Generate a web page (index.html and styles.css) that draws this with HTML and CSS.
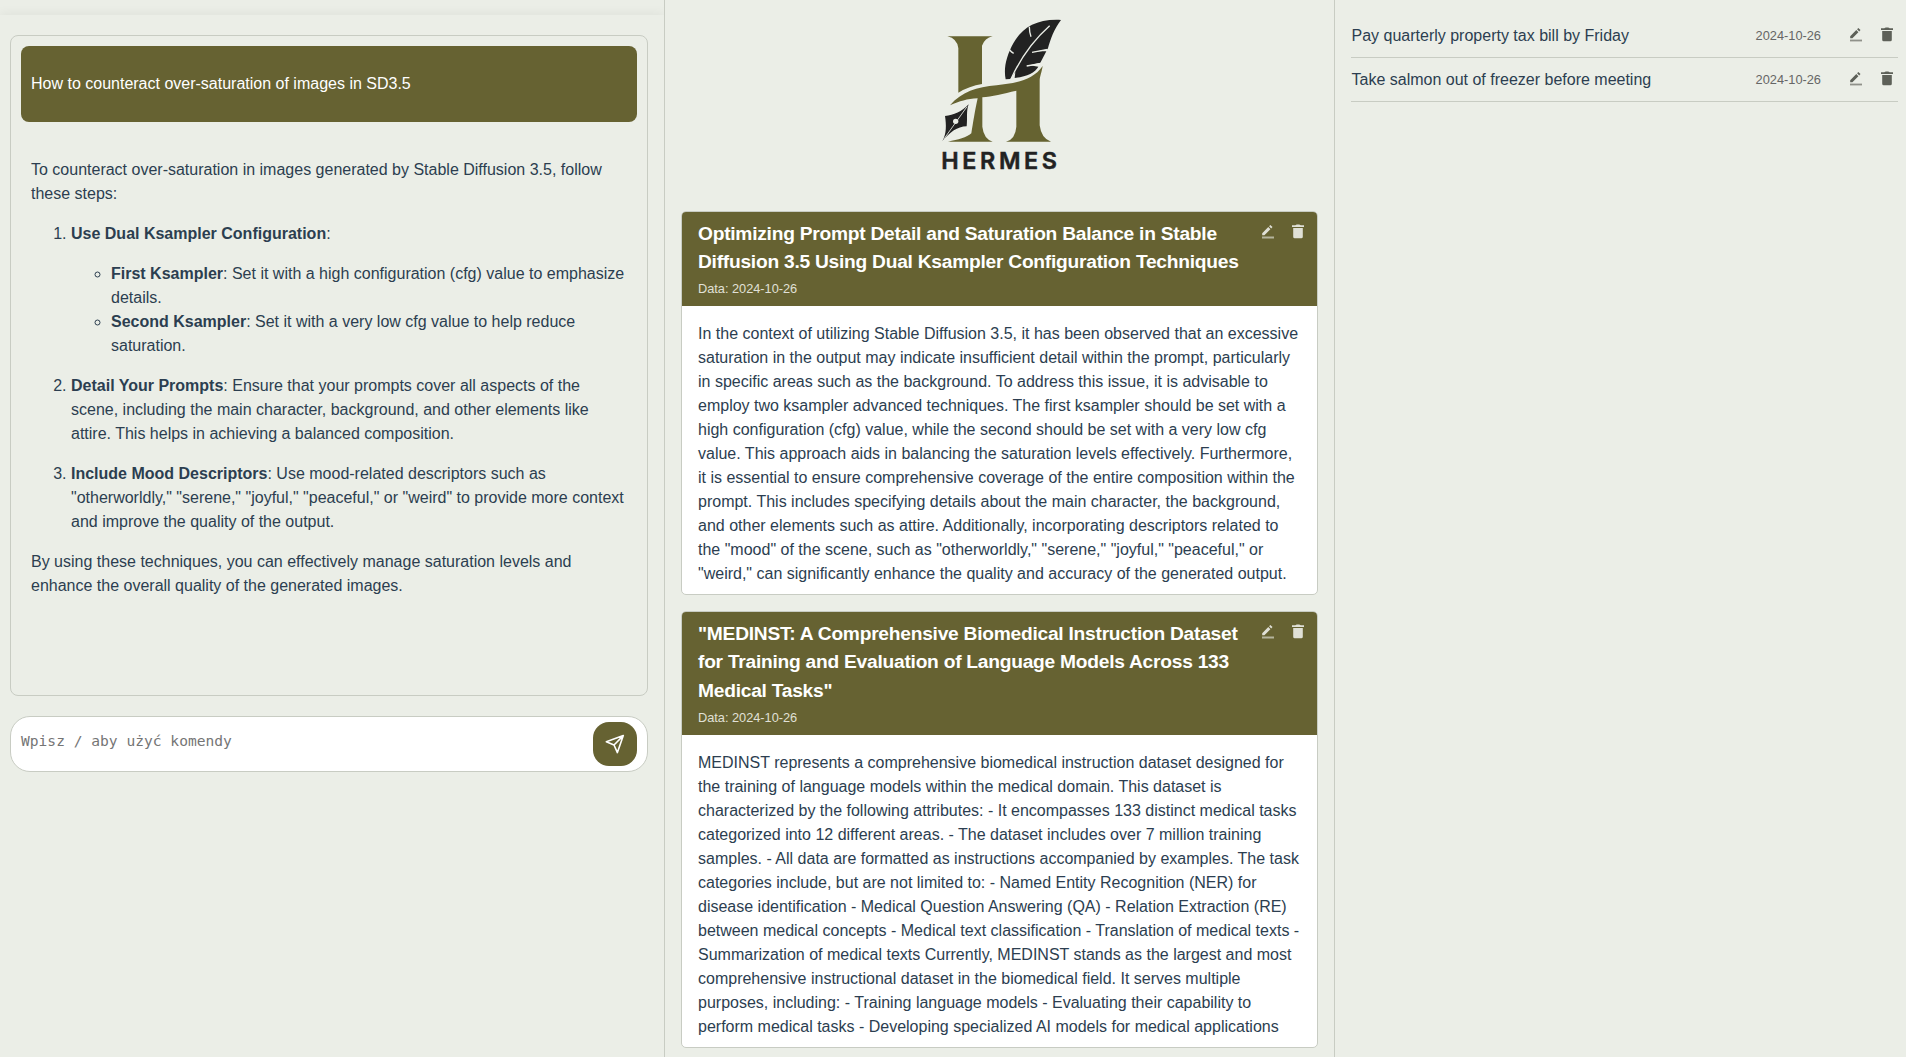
FILE: index.html
```html
<!DOCTYPE html>
<html lang="pl">
<head>
<meta charset="utf-8">
<title>Hermes</title>
<link rel="stylesheet" href="styles.css">
</head>
<body>
<svg class="sprite" aria-hidden="true">
  <symbol id="edit" viewBox="0 0 16 16">
    <path d="M2.2 10.2V12.2H4.4L10.4 6.2L8.3 4.1ZM11.2 5.4L12.5 4.1L10.3 1.9L9.1 3.2Z" fill="currentColor"/>
    <path d="M2 13.6H14V15.4H2Z" fill="currentColor" opacity=".65"/>
  </symbol>
  <symbol id="trash" viewBox="0 0 16 16">
    <path d="M2 2.3H5.3Q6 1.5 7 1.5H9Q10 1.5 10.7 2.3H14V4H2ZM3.2 5H12.8V13.8Q12.8 15.3 11.3 15.3H4.7Q3.2 15.3 3.2 13.8Z" fill="currentColor"/>
  </symbol>
</svg>
<div class="app">
  <section class="chat">
    <div class="chat-panel">
      <div class="messages">
        <div class="message user"><p>How to counteract over-saturation of images in SD3.5</p></div>
        <div class="message">
          <p>To counteract over-saturation in images generated by Stable Diffusion 3.5, follow these steps:</p>
          <ol>
            <li><p><strong>Use Dual Ksampler Configuration</strong>:</p>
              <ul>
                <li><strong>First Ksampler</strong>: Set it with a high configuration (cfg) value to emphasize details.</li>
                <li><strong>Second Ksampler</strong>: Set it with a very low cfg value to help reduce saturation.</li>
              </ul>
            </li>
            <li><p><strong>Detail Your Prompts</strong>: Ensure that your prompts cover all aspects of the scene, including the main character, background, and other elements like attire. This helps in achieving a balanced composition.</p></li>
            <li><p><strong>Include Mood Descriptors</strong>: Use mood-related descriptors such as "otherworldly," "serene," "joyful," "peaceful," or "weird" to provide more context and improve the quality of the output.</p></li>
          </ol>
          <p>By using these techniques, you can effectively manage saturation levels and enhance the overall quality of the generated images.</p>
        </div>
      </div>
      <div class="composer">
        <span class="placeholder">Wpisz / aby użyć komendy</span>
        <button class="send" aria-label="Send">
          <svg width="20" height="20" viewBox="0 0 20 20" fill="none" stroke="#fff" stroke-width="1.6" stroke-linejoin="round" stroke-linecap="round"><path d="M18.3 1.6L1.3 7.8L9 11L12.4 18.6ZM9 11L18.3 1.6"/></svg>
        </button>
      </div>
    </div>
  </section>

  <main class="notes">
    <div class="logo">
      <svg width="160" height="190" viewBox="0 0 480 570" role="img" aria-label="Hermes">
        <g fill="#666331">
          <path d="M82 109H218Q194 115 186 137V252Q148 258 115 278V145Q112 116 82 109Z"/>
          <path d="M90 316C125 275 170 262 230 256C285 250 338 242 368 198C365 217 360 228 359 240V376Q364 416 393 425H258Q286 418 289 380V272C250 281 215 290 187 292V380Q191 416 218 425H84C115 419 140 413 154 400C159 370 165 330 173 295C140 297 120 303 90 316Z"/>
        </g>
        <path d="M423 60C350 56 305 84 280 130C260 166 250 205 257 238L271 237L286 216L284 234C320 230 345 218 355 200L338 197L320 198L361 188L379 154L358 154L336 157L383 148C392 115 402 88 423 60Z" fill="#222"/>
        <path d="M389 77C345 116 304 168 272 239M328 80Q328 95 333 110M269 150Q274 156 281 160M336 157L383 148M320 198L363 190" fill="none" stroke="#ebeee7" stroke-width="4"/>
        <path d="M146 313L67 423C80 401 79 375 75 348C101 346 126 335 146 313C138 334 143 354 140 379C111 380 91 396 67 423Z" fill="#222"/>
        <path d="M141 320L71 418" stroke="#ebeee7" stroke-width="2.5"/>
        <circle cx="107" cy="364" r="8" fill="#ebeee7"/>
        <text class="logo-name" x="64" y="508" textLength="347" lengthAdjust="spacing">HERMES</text>
      </svg>
    </div>
    <article class="card">
      <header>
        <div>
          <h2>Optimizing Prompt Detail and Saturation Balance in Stable Diffusion 3.5 Using Dual Ksampler Configuration Techniques</h2>
          <small>Data: 2024-10-26</small>
        </div>
        <div class="actions"><svg><use href="#edit"/></svg><svg><use href="#trash"/></svg></div>
      </header>
      <p>In the context of utilizing Stable Diffusion 3.5, it has been observed that an excessive saturation in the output may indicate insufficient detail within the prompt, particularly in specific areas such as the background. To address this issue, it is advisable to employ two ksampler advanced techniques. The first ksampler should be set with a high configuration (cfg) value, while the second should be set with a very low cfg value. This approach aids in balancing the saturation levels effectively. Furthermore, it is essential to ensure comprehensive coverage of the entire composition within the prompt. This includes specifying details about the main character, the background, and other elements such as attire. Additionally, incorporating descriptors related to the "mood" of the scene, such as "otherworldly," "serene," "joyful," "peaceful," or "weird," can significantly enhance the quality and accuracy of the generated output.</p>
    </article>
    <article class="card">
      <header>
        <div>
          <h2>"MEDINST: A Comprehensive Biomedical Instruction Dataset for Training and Evaluation of Language Models Across 133 Medical Tasks"</h2>
          <small>Data: 2024-10-26</small>
        </div>
        <div class="actions"><svg><use href="#edit"/></svg><svg><use href="#trash"/></svg></div>
      </header>
      <p>MEDINST represents a comprehensive biomedical instruction dataset designed for the training of language models within the medical domain. This dataset is characterized by the following attributes: - It encompasses 133 distinct medical tasks categorized into 12 different areas. - The dataset includes over 7 million training samples. - All data are formatted as instructions accompanied by examples. The task categories include, but are not limited to: - Named Entity Recognition (NER) for disease identification - Medical Question Answering (QA) - Relation Extraction (RE) between medical concepts - Medical text classification - Translation of medical texts - Summarization of medical texts Currently, MEDINST stands as the largest and most comprehensive instructional dataset in the biomedical field. It serves multiple purposes, including: - Training language models - Evaluating their capability to perform medical tasks - Developing specialized AI models for medical applications</p>
    </article>
  </main>

  <aside class="tasks">
    <div class="task">
      <span class="task-name">Pay quarterly property tax bill by Friday</span>
      <time>2024-10-26</time>
      <div class="actions"><svg><use href="#edit"/></svg><svg><use href="#trash"/></svg></div>
    </div>
    <div class="task">
      <span class="task-name">Take salmon out of freezer before meeting</span>
      <time>2024-10-26</time>
      <div class="actions"><svg><use href="#edit"/></svg><svg><use href="#trash"/></svg></div>
    </div>
  </aside>
</div>
</body>
</html>
```
FILE: styles.css
```css
* { box-sizing: border-box; }
body {
  margin: 0;
  background: #ebeee7;
  color: #2c3e50;
  font: 16px/24px "Liberation Sans", Arial, sans-serif;
}
.sprite { display: none; }
.app {
  display: grid;
  grid-template-columns: 665px 670px 1fr;
  height: 1057px;
  overflow: hidden;
}
.chat, .notes { border-right: 1px solid #c8ccc3; overflow: hidden; }
.chat { padding-top: 15px; }
.chat-panel {
  display: flex;
  flex-direction: column;
  gap: 20px;
  padding: 20px 16px 20px 10px;
  height: 777px;
  background: #ebeee7;
  box-shadow: 0 -2px 10px rgba(0, 0, 0, .05);
  clip-path: inset(-15px 0 0 0);
}
.messages {
  display: flex;
  flex-direction: column;
  gap: 10px;
  flex: none;
  height: 661px;
  padding: 10px;
  border: 1px solid #c8ccc3;
  border-radius: 8px;
}
.message { padding: 10px; display: flow-root; border-radius: 8px; }
.message p { margin: 16px 0; }
.message ol { margin: 16px 0; padding-left: 40px; }
.message ul { margin: 0; padding-left: 40px; }
.message.user { background: #666232; color: #fff; }
.composer {
  display: flex;
  align-items: center;
  justify-content: space-between;
  flex: none;
  height: 56px;
  padding: 0 10px;
  background: #fff;
  border: 1px solid #c8ccc3;
  border-radius: 20px;
}
.placeholder {
  padding-bottom: 7px;
  color: #757575;
  font: 14.6px/20px "DejaVu Sans Mono", monospace;
}
.send {
  display: grid;
  place-items: center;
  width: 44px;
  height: 44px;
  padding: 0;
  border: 0;
  border-radius: 16px;
  background: #666232;
}
.notes { padding: 0 16px; }
.logo { height: 211px; padding-left: 239px; }
.logo svg { display: block; }
.logo-name { font: 600 70px Inter, sans-serif; fill: #222; stroke: #222; stroke-width: 1.5px; }
.card {
  margin-bottom: 16px;
  border: 1px solid #c8ccc3;
  border-radius: 5px;
  background: #fff;
  overflow: hidden;
}
.card header {
  display: flex;
  justify-content: space-between;
  gap: 12px;
  padding: 7.5px 11px 7.5px 16px;
  background: #666232;
}
.card h2 {
  margin: 0;
  color: #fff;
  font-size: 19.2px;
  line-height: 28.8px;
  letter-spacing: -.25px;
}
.card small {
  display: block;
  margin-top: 2px;
  color: #e0e0d6;
  font-size: 12.8px;
  line-height: 19.6px;
  letter-spacing: -.03px;
}
.card p { margin: 0; padding: 16px 16px 8px; }
.actions { display: flex; flex: none; }
.actions svg { width: 16px; height: 16px; }
.card .actions { gap: 14px; padding-top: 3.5px; color: #e0e0d6; }
.tasks { padding: 14px 8px 0 16px; }
.task {
  display: flex;
  height: 44px;
  align-items: center;
  border-bottom: 1px solid #c8ccc3;
}
.task-name { flex: 1; padding-left: .5px; }
.task time { color: #666; font-size: 12.8px; }
.task .actions { gap: 15px; padding: 0 3px 4px 27px; color: #5d6058; }
```
